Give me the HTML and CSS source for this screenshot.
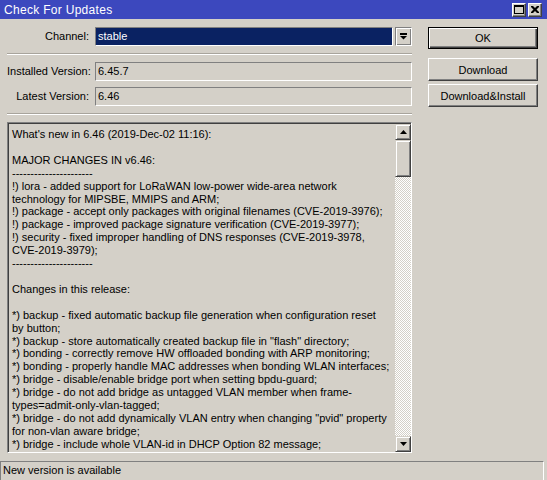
FILE: index.html
```html
<!DOCTYPE html>
<html>
<head>
<meta charset="utf-8">
<link rel="stylesheet" href="styles.css">
</head>
<body>
<div class="win">
  <div class="titlebar">
    <span class="title-text">Check For Updates</span>
    <div class="tbtns">
      <span class="tbtn"><svg width="10" height="9" viewBox="0 0 10 9"><rect x="0.5" y="0.5" width="9" height="8" fill="none" stroke="#000"/><rect x="0" y="0" width="10" height="2" fill="#000"/></svg></span>
      <span class="tbtn"><svg width="8" height="7" viewBox="0 0 8 7"><path d="M0 0h2l2 2 2-2h2v1L5.5 3.5 8 6v1H6L4 5 2 7H0V6l2.5-2.5L0 1z" fill="#000"/></svg></span>
    </div>
  </div>
  <div class="body">
    <div class="main">
      <div class="row">
        <span class="lbl">Channel:</span>
        <div class="select">stable</div>
        <span class="drop"><svg width="7" height="7" viewBox="0 0 7 7"><rect x="0" y="0" width="7" height="2" fill="#000"/><path d="M0 3h7L3.5 6.5z" fill="#000"/></svg></span>
      </div>
      <div class="sep"></div>
      <div class="row">
        <span class="lbl">Installed Version:</span>
        <div class="field">6.45.7</div>
      </div>
      <div class="row row-gap">
        <span class="lbl">Latest Version:</span>
        <div class="field">6.46</div>
      </div>
      <div class="sep"></div>
      <div class="memo">
        <div class="memo-text">What's new in 6.46 (2019-Dec-02 11:16):

MAJOR CHANGES IN v6.46:
----------------------
!) lora - added support for LoRaWAN low-power wide-area network
technology for MIPSBE, MMIPS and ARM;
!) package - accept only packages with original filenames (CVE-2019-3976);
!) package - improved package signature verification (CVE-2019-3977);
!) security - fixed improper handling of DNS responses (CVE-2019-3978,
CVE-2019-3979);
----------------------

Changes in this release:

*) backup - fixed automatic backup file generation when configuration reset
by button;
*) backup - store automatically created backup file in "flash" directory;
*) bonding - correctly remove HW offloaded bonding with ARP monitoring;
*) bonding - properly handle MAC addresses when bonding WLAN interfaces;
*) bridge - disable/enable bridge port when setting bpdu-guard;
*) bridge - do not add bridge as untagged VLAN member when frame-
types=admit-only-vlan-tagged;
*) bridge - do not add dynamically VLAN entry when changing "pvid" property
for non-vlan aware bridge;
*) bridge - include whole VLAN-id in DHCP Option 82 message;</div>
        <div class="scroll">
          <span class="sbtn"><svg width="7" height="4" viewBox="0 0 7 4"><path d="M3.5 0L7 4H0z" fill="#000"/></svg></span>
          <span class="thumb"></span>
          <span class="track"></span>
          <span class="sbtn"><svg width="7" height="4" viewBox="0 0 7 4"><path d="M0 0h7L3.5 4z" fill="#000"/></svg></span>
        </div>
      </div>
    </div>
    <div class="side">
      <button class="btn btn-default">OK</button>
      <button class="btn btn-first">Download</button>
      <button class="btn">Download&amp;Install</button>
    </div>
  </div>
  <div class="status">New version is available</div>
</div>
</body>
</html>
```
FILE: styles.css
```css
html, body {
  margin: 0;
  padding: 0;
  background: #d4d0c8;
}
.win {
  width: 547px;
  height: 480px;
  display: flex;
  flex-direction: column;
  background: #d4d0c8;
  font-family: "Liberation Sans", Arial, sans-serif;
  font-size: 11px;
  color: #000;
  overflow: hidden;
}
.titlebar {
  height: 19px;
  flex: none;
  background: #3c48be;
  display: flex;
  align-items: center;
  justify-content: space-between;
  padding: 0 5px 0 4px;
}
.title-text {
  color: #fff;
  font-size: 12px;
  letter-spacing: 0.3px;
}
.tbtns {
  display: flex;
  gap: 2px;
}
.tbtn {
  width: 14px;
  height: 14px;
  box-sizing: border-box;
  display: flex;
  align-items: center;
  justify-content: center;
  background: #d4d0c8;
  border: 1px solid;
  border-color: #fff #404040 #404040 #fff;
  box-shadow: inset -1px -1px #808080;
}
.body {
  flex: 1;
  display: flex;
  padding: 8px 0 8px 7px;
  min-height: 0;
}
.main {
  width: 405px;
  display: flex;
  flex-direction: column;
}
.row {
  display: flex;
  align-items: stretch;
  height: 19px;
  flex: none;
}
.row-gap {
  margin-top: 6px;
}
.lbl {
  width: 82px;
  margin-right: 6px;
  text-align: right;
  line-height: 19px;
  white-space: nowrap;
}
.select {
  flex: 1;
  box-sizing: border-box;
  border: 1px solid;
  border-color: #808080 #fff #fff #808080;
  background: #0a2262;
  color: #fff;
  line-height: 17px;
  padding-left: 2px;
}
.drop {
  width: 17px;
  margin-left: 2px;
  box-sizing: border-box;
  display: flex;
  align-items: center;
  justify-content: center;
  border: 1px solid;
  border-color: #808080 #fff #fff #808080;
  box-shadow: inset 1px 1px #fff, inset -1px -1px #808080;
}
.field {
  flex: 1;
  box-sizing: border-box;
  border: 1px solid;
  border-color: #808080 #fff #fff #808080;
  line-height: 17px;
  padding-left: 2px;
}
.sep {
  flex: none;
  border-top: 1px solid #a8a49c;
  border-bottom: 1px solid #fff;
  height: 0;
  margin: 7px 0;
}
.memo {
  flex: 1;
  min-height: 0;
  display: flex;
  box-sizing: border-box;
  border: 1px solid;
  border-color: #808080 #fff #fff #808080;
  box-shadow: inset 1px 1px #404040;
  padding: 1px 0 0 1px;
}
.memo-text {
  flex: 1;
  min-width: 0;
  overflow: hidden;
  white-space: pre;
  line-height: 12.9px;
  padding: 4px 0 0 3px;
}
.scroll {
  width: 16px;
  display: flex;
  flex-direction: column;
}
.sbtn, .thumb {
  height: 16px;
  flex: none;
  box-sizing: border-box;
  display: flex;
  align-items: center;
  justify-content: center;
  background: #d4d0c8;
  border: 1px solid;
  border-color: #d4d0c8 #404040 #404040 #d4d0c8;
  box-shadow: inset 1px 1px #fff, inset -1px -1px #808080;
}
.thumb {
  height: 37px;
}
.track {
  flex: 1;
  background: repeating-conic-gradient(#fff 0 25%, #d4d0c8 0 50%) 0 0 / 2px 2px;
}
.side {
  width: 110px;
  margin-left: 16px;
  display: flex;
  flex-direction: column;
}
.btn {
  height: 23px;
  margin: 0 0 3px 0;
  padding: 0;
  font: inherit;
  color: #000;
  background: #d4d0c8;
  box-sizing: border-box;
  border: 1px solid;
  border-color: #fff #404040 #404040 #fff;
  box-shadow: inset -1px -1px #808080;
}
.btn-default {
  height: 22px;
  border-color: #000;
  box-shadow: inset 1px 1px #fff, inset -1px -1px #404040, inset -2px -2px #808080;
}
.btn-first {
  margin-top: 6px;
}
.status {
  height: 19px;
  flex: none;
  width: 544px;
  box-sizing: border-box;
  border-top: 1px solid #808080;
  border-left: 1px solid #808080;
  border-right: 1px solid #fff;
  line-height: 17px;
  padding-left: 2px;
}
```
